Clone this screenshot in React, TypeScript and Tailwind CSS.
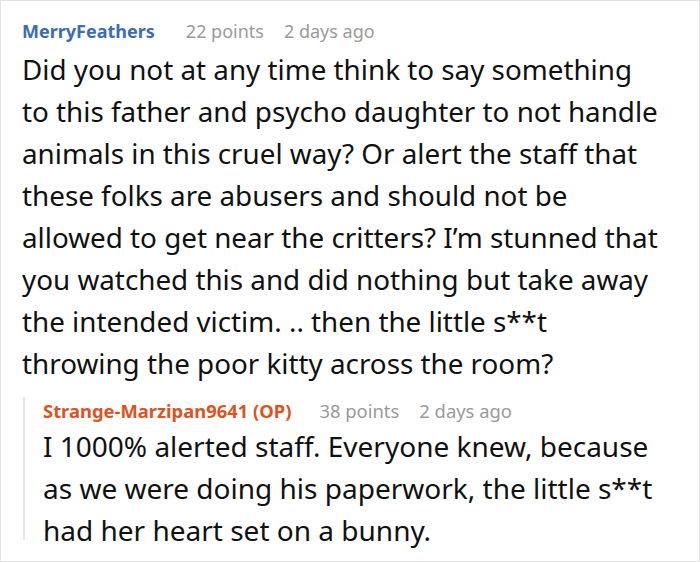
import React from "react";

const mainLines = [
  "Did you not at any time think to say something",
  "to this father and psycho daughter to not handle",
  "animals in this cruel way? Or alert the staff that",
  "these folks are abusers and should not be",
  "allowed to get near the critters? I\u2019m stunned that",
  "you watched this and did nothing but take away",
  "the intended victim. .. then the little s**t",
  "throwing the poor kitty across the room?",
];

const replyLines = [
  "I 1000% alerted staff. Everyone knew, because",
  "as we were doing his paperwork, the little s**t",
  "had her heart set on a bunny.",
];

export default function App() {
  return (
    <div
      className="w-[700px] h-[562px] overflow-hidden border border-[#e3e3e3] bg-white pl-[21px] pt-[16px]"
      style={{ fontFamily: '"Noto Sans", "Open Sans", sans-serif' }}
    >
      <div className="flex items-baseline text-[18px] leading-[28px]">
        <span className="font-bold text-[#3b6cb5]">MerryFeathers</span>
        <span className="ml-[31px] text-[#9a9a9a]">22 points</span>
        <span className="ml-[20px] text-[#9a9a9a]">2 days ago</span>
      </div>
      <div className="mt-[3px] text-[27.8px] leading-[42px] text-[#111111]">
        {mainLines.map((l, i) => (
          <div key={i} className="whitespace-nowrap">
            {l}
          </div>
        ))}
      </div>
      <div className="mt-[13px] flex">
        <div className="ml-[1px] h-[143px] w-[1.5px] shrink-0 bg-[#e6e6e6]" />
        <div className="pl-[18.5px]">
          <div className="flex items-baseline text-[18.4px] leading-[28px]">
            <span className="font-bold text-[#de521e]">Strange-Marzipan9641 (OP)</span>
            <span className="ml-[28px] text-[#9a9a9a]">38 points</span>
            <span className="ml-[20px] text-[#9a9a9a]">2 days ago</span>
          </div>
          <div className="mt-[0px] text-[28px] leading-[42px] text-[#111111]">
            {replyLines.map((l, i) => (
              <div key={i} className="whitespace-nowrap">
                {l}
              </div>
            ))}
          </div>
        </div>
      </div>
    </div>
  );
}
